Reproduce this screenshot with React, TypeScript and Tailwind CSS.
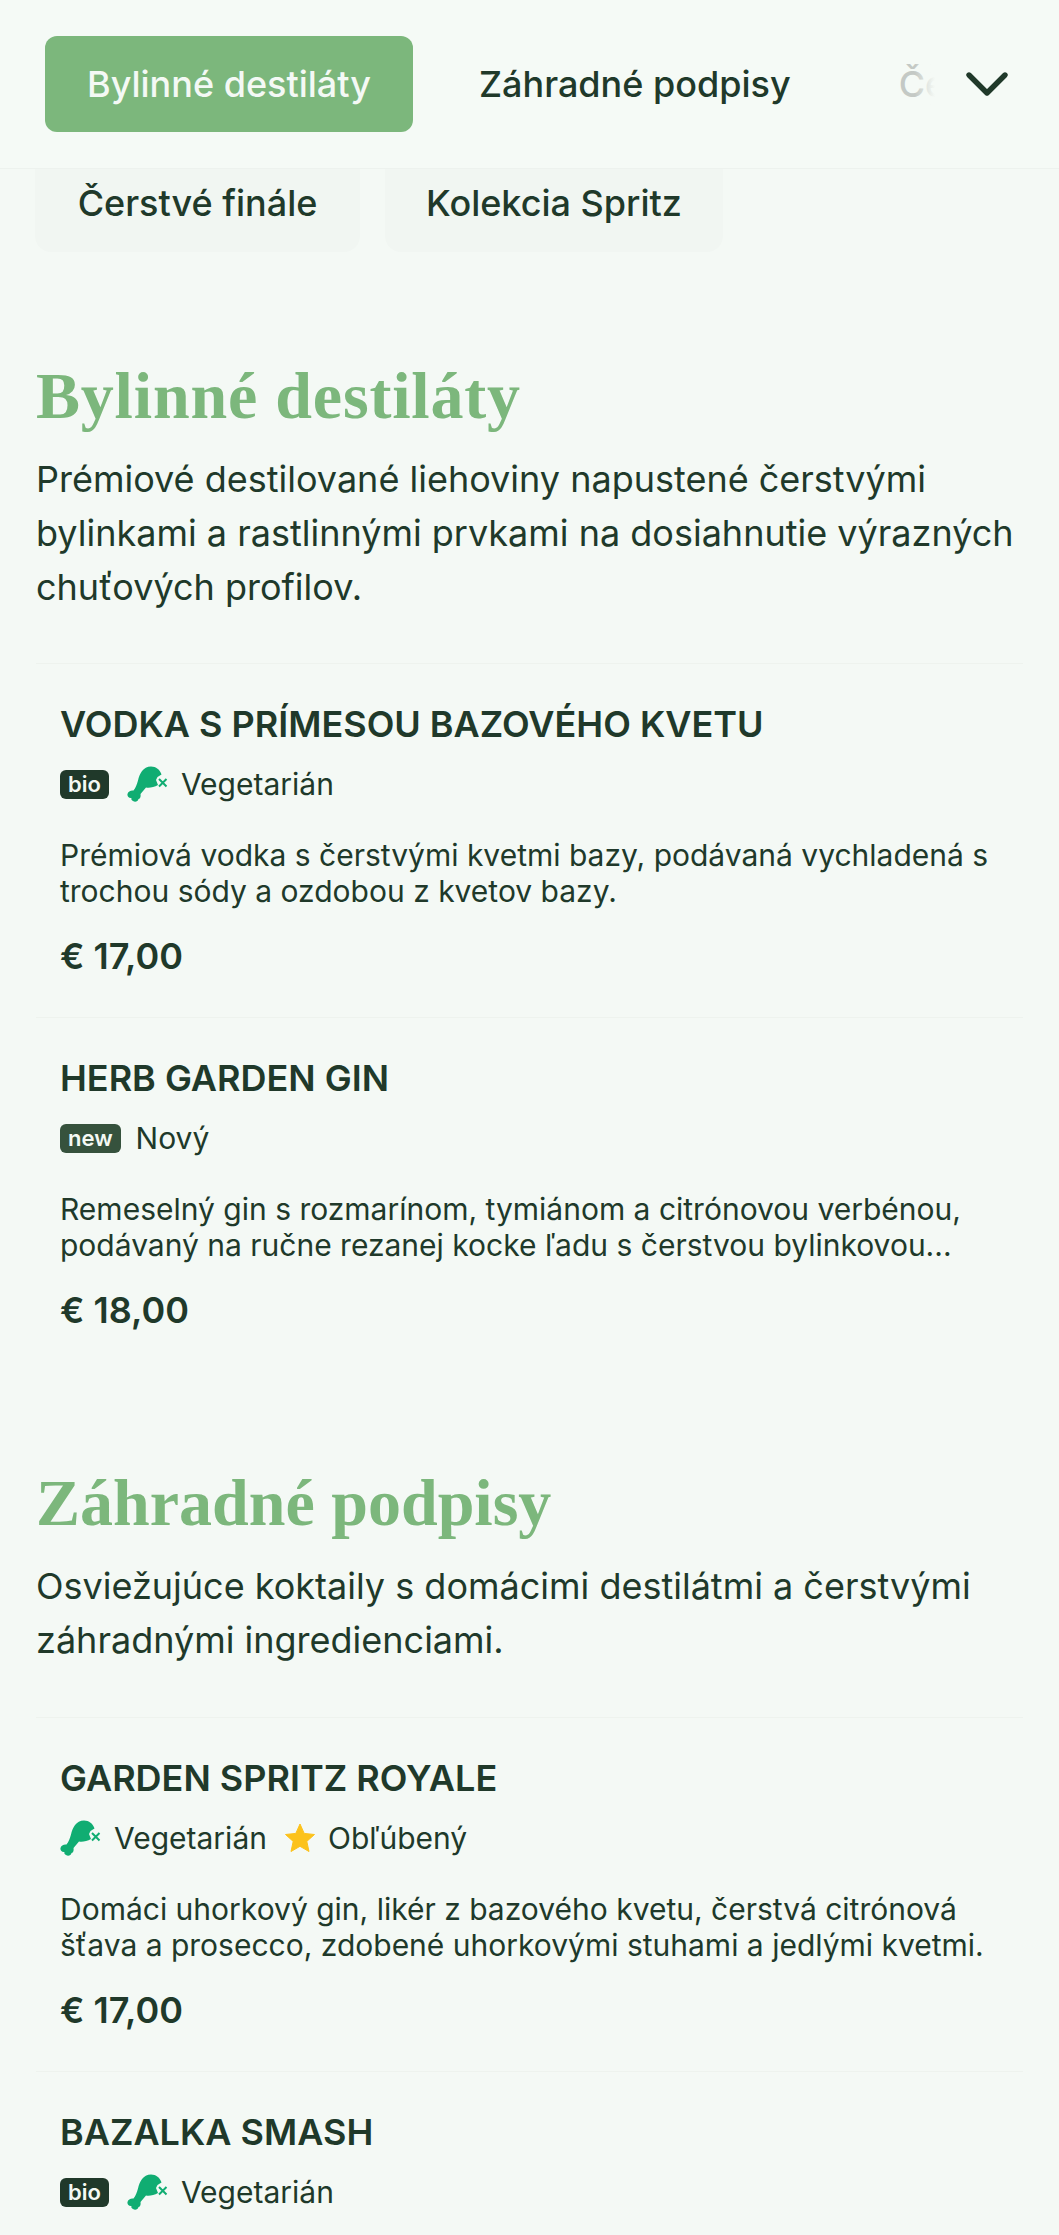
import React from "react";
import { ChevronDown } from "lucide-react";

function Leg() {
  return (
    <svg width="42" height="36" viewBox="0 0 42 36" className="shrink-0">
      <path d="M24 .5C29 .5 33 3.500 34.500 8.500L30.500 11 29 14 31 19C27 21.500 22 22 19 21.500L13.500 28C14 31 13 33 11.500 33 11 35.500 8 36.500 6 35 4.500 34.500 4 33 4.500 32 2 32.500 0 30.500 .5 28 1 25.500 4 24 6.500 24.500 8.500 22 10 18 11 14.500 12.500 8 16 .5 24 .5Z" fill="#10ad72" />
      <path d="M32 13l7.500 7.500M39.500 13L32 20.500" stroke="#10ad72" strokeWidth="2" />
    </svg>
  );
}

function Badge({ t, c }: { t: string; c: string }) {
  return <span className={`rounded-[6px] ${c} px-[8px] h-[29px] flex items-center text-[22px] font-semibold text-[#f4f9f4] leading-none`}>{t}</span>;
}

function Tag({ kind }: { kind: string }) {
  if (kind === "bio") return <Badge t="bio" c="bg-[#20392a]" />;
  if (kind === "new") return <div className="flex items-center gap-[15px]"><Badge t="new" c="bg-[#36523d]" /><span>Nový</span></div>;
  if (kind === "veg") return <div className="flex items-center gap-[12px]"><Leg /><span>Vegetarián</span></div>;
  return (
    <div className="flex items-center gap-[13px]">
      <svg width="30" height="30" viewBox="0 0 30 30" className="shrink-0"><path d="M15 1l4.200 9.400 10.300 1.100-7.700 6.900 2.200 10.100L15 23.300 6 28.500l2.200-10.100L.5 11.500l10.300-1.100z" fill="#fcc21b" stroke="#fcc21b" strokeWidth="1" strokeLinejoin="round" /></svg>
      <span>Obľúbený</span>
    </div>
  );
}

function Item({ name, tags, desc, price }: { name: string; tags: string[]; desc?: string; price?: string }) {
  return (
    <article className="border-t border-[#eef3ee] px-6 pt-[38px] h-[354px]">
      <h3 className="text-[36px] leading-[44px] font-semibold uppercase text-[#20392a]">{name}</h3>
      <div className="mt-5 flex items-center gap-[18px] h-[36px] text-[30px] leading-[36px] text-[#20392a]">
        {tags.map((t) => <Tag kind={t} key={t} />)}
      </div>
      {desc && <p className="mt-[35px] text-[30px] leading-[36px] text-[#20392a]">{desc}</p>}
      {price && <p className="mt-[25px] text-[36px] leading-[44px] font-semibold text-[#20392a]">{price}</p>}
    </article>
  );
}

export default function App() {
  return (
    <div className="w-[1059px] h-[2235px] overflow-hidden bg-[#f4f9f5] font-['Inter',sans-serif]">
      <header className="h-[169px] border-b border-[#edf2ee] bg-[#f5faf6] flex items-center pl-[45px] pr-[36px]">
        <div className="w-[368px] h-[96px] rounded-xl bg-[#7cb77c] flex items-center justify-center text-[36px] font-medium text-[#f4f9f5]">Bylinné destiláty</div>
        <div className="ml-[66px] text-[36px] font-medium text-[#20392a] whitespace-nowrap">Záhradné podpisy</div>
        <div className="relative ml-[108px] w-[36px] overflow-hidden text-[36px] font-medium text-[#c4c9c5]">
          Čerstvé
          <div className="absolute inset-y-0 right-0 w-[20px] bg-gradient-to-r from-transparent to-[#f5faf6]" />
        </div>
        <ChevronDown size={72} strokeWidth={1.800} className="ml-auto text-[#20392a]" />
      </header>
      <div className="pl-[35px] flex gap-[25px] h-[83px]">
        <div className="w-[325px] pb-[15px] rounded-b-2xl bg-[#f1f6f2] flex items-center justify-center text-[36px] font-medium text-[#20392a]">Čerstvé finále</div>
        <div className="w-[338px] pb-[15px] rounded-b-2xl bg-[#f1f6f2] flex items-center justify-center text-[36px] font-medium text-[#20392a]">Kolekcia Spritz</div>
      </div>
      <main className="px-9 pt-[108px]">
        <section>
          <h2 className="font-['Liberation_Serif',serif] font-bold text-[66px] leading-[72px] tracking-[0.8px] text-[#7cb77c]">Bylinné destiláty</h2>
          <p className="mt-5 text-[36px] leading-[54px] text-[#20392a]">Prémiové destilované liehoviny napustené čerstvými bylinkami a rastlinnými prvkami na dosiahnutie výrazných chuťových profilov.</p>
          <div className="mt-[49px]">
            <Item name="Vodka s prímesou bazového kvetu" tags={["bio", "veg"]} desc="Prémiová vodka s čerstvými kvetmi bazy, podávaná vychladená s trochou sódy a ozdobou z kvetov bazy." price="€ 17,00" />
            <Item name="Herb Garden Gin" tags={["new"]} desc="Remeselný gin s rozmarínom, tymiánom a citrónovou verbénou, podávaný na ručne rezanej kocke ľadu s čerstvou bylinkovou..." price="€ 18,00" />
          </div>
        </section>
        <section className="mt-[96px]">
          <h2 className="font-['Liberation_Serif',serif] font-bold text-[66px] leading-[72px] text-[#7cb77c]">Záhradné podpisy</h2>
          <p className="mt-5 text-[36px] leading-[54px] text-[#20392a]">Osviežujúce koktaily s domácimi destilátmi a čerstvými záhradnými ingredienciami.</p>
          <div className="mt-[50px]">
            <Item name="Garden Spritz Royale" tags={["veg", "star"]} desc="Domáci uhorkový gin, likér z bazového kvetu, čerstvá citrónová šťava a prosecco, zdobené uhorkovými stuhami a jedlými kvetmi." price="€ 17,00" />
            <Item name="Bazalka Smash" tags={["bio", "veg"]} />
          </div>
        </section>
      </main>
    </div>
  );
}
